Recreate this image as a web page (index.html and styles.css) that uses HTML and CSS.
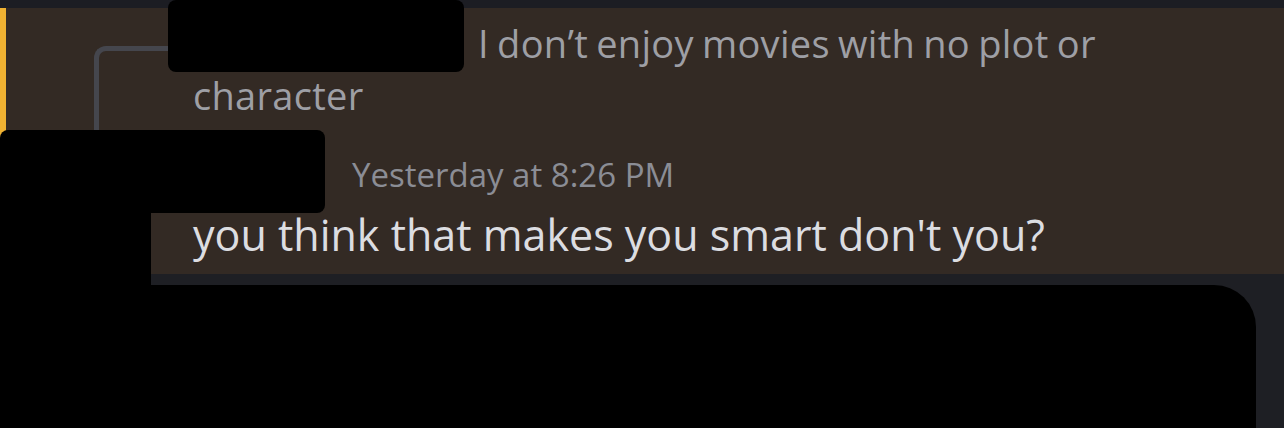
FILE: index.html
```html
<!DOCTYPE html>
<html lang="en">
<head>
<meta charset="utf-8">
<title>Chat</title>
<link rel="stylesheet" href="styles.css">
</head>
<body>
<div class="screen">
  <div class="top-band"></div>
  <div class="message">
    <div class="reply">
      <p class="reply-text">I don’t enjoy movies with no plot or character</p>
    </div>
    <div class="header">
      <span class="timestamp">Yesterday at 8:26 PM</span>
    </div>
    <p class="content">you think that makes you smart don't you?</p>
    <div class="redact redact-reply-name"></div>
    <div class="redact redact-author"></div>
    <div class="redact redact-avatar"></div>
  </div>
  <div class="gap"></div>
  <div class="redact-panel"></div>
</div>
</body>
</html>
```

FILE: styles.css
```css
html, body {
  margin: 0;
  padding: 0;
  background: #1e1f24;
}

.screen {
  width: 1284px;
  height: 428px;
  overflow: hidden;
  font-family: "Open Sans", "Noto Sans", sans-serif;
}

.top-band {
  height: 8px;
  background: #1c1d23;
}

/* highlighted (mentioned) message */
.message {
  position: relative;
  height: 266px;
  box-sizing: border-box;
  background: #332a24;
  border-left: 6px solid #f0b232;
  padding-top: 9px;
}

.reply {
  position: relative;
  padding-left: 187px;
}

/* reply spine linking the quoted line to the avatar */
.reply::before {
  content: "";
  position: absolute;
  left: 88px;
  top: 29px;
  width: 80px;
  height: 92px;
  border-top: 5px solid #45464d;
  border-left: 5px solid #45464d;
  border-top-left-radius: 12px;
  box-sizing: border-box;
}

.reply-text {
  margin: 0;
  max-width: 960px;
  font-size: 38px;
  line-height: 52px;
  letter-spacing: 0.3px;
  word-spacing: -2px;
  color: #9e9fa5;
  text-indent: 285px;
}

.header {
  padding-left: 346px;
  margin-top: 34px;
  height: 40px;
}

.timestamp {
  font-size: 33px;
  line-height: 40px;
  color: #8b8d95;
}

.content {
  margin: 14px 0 0;
  padding-left: 187px;
  font-size: 43px;
  line-height: 52px;
  color: #dcdde1;
}

/* black redaction blocks laid over names and avatar */
.redact {
  position: absolute;
  background: #000;
}

.redact-reply-name {
  left: 162px;
  top: -8px;
  width: 296px;
  height: 72px;
  border-radius: 8px;
}

.redact-author {
  left: -6px;
  top: 122px;
  width: 325px;
  height: 83px;
  border-radius: 8px;
}

.redact-avatar {
  left: -6px;
  top: 190px;
  width: 151px;
  height: 90px;
}

.gap {
  height: 11px;
  background: #1e1f24;
  margin-left: 151px;
}

.redact-panel {
  height: 143px;
  background: #000;
  margin-right: 28px;
  border-top-right-radius: 42px;
}
```
